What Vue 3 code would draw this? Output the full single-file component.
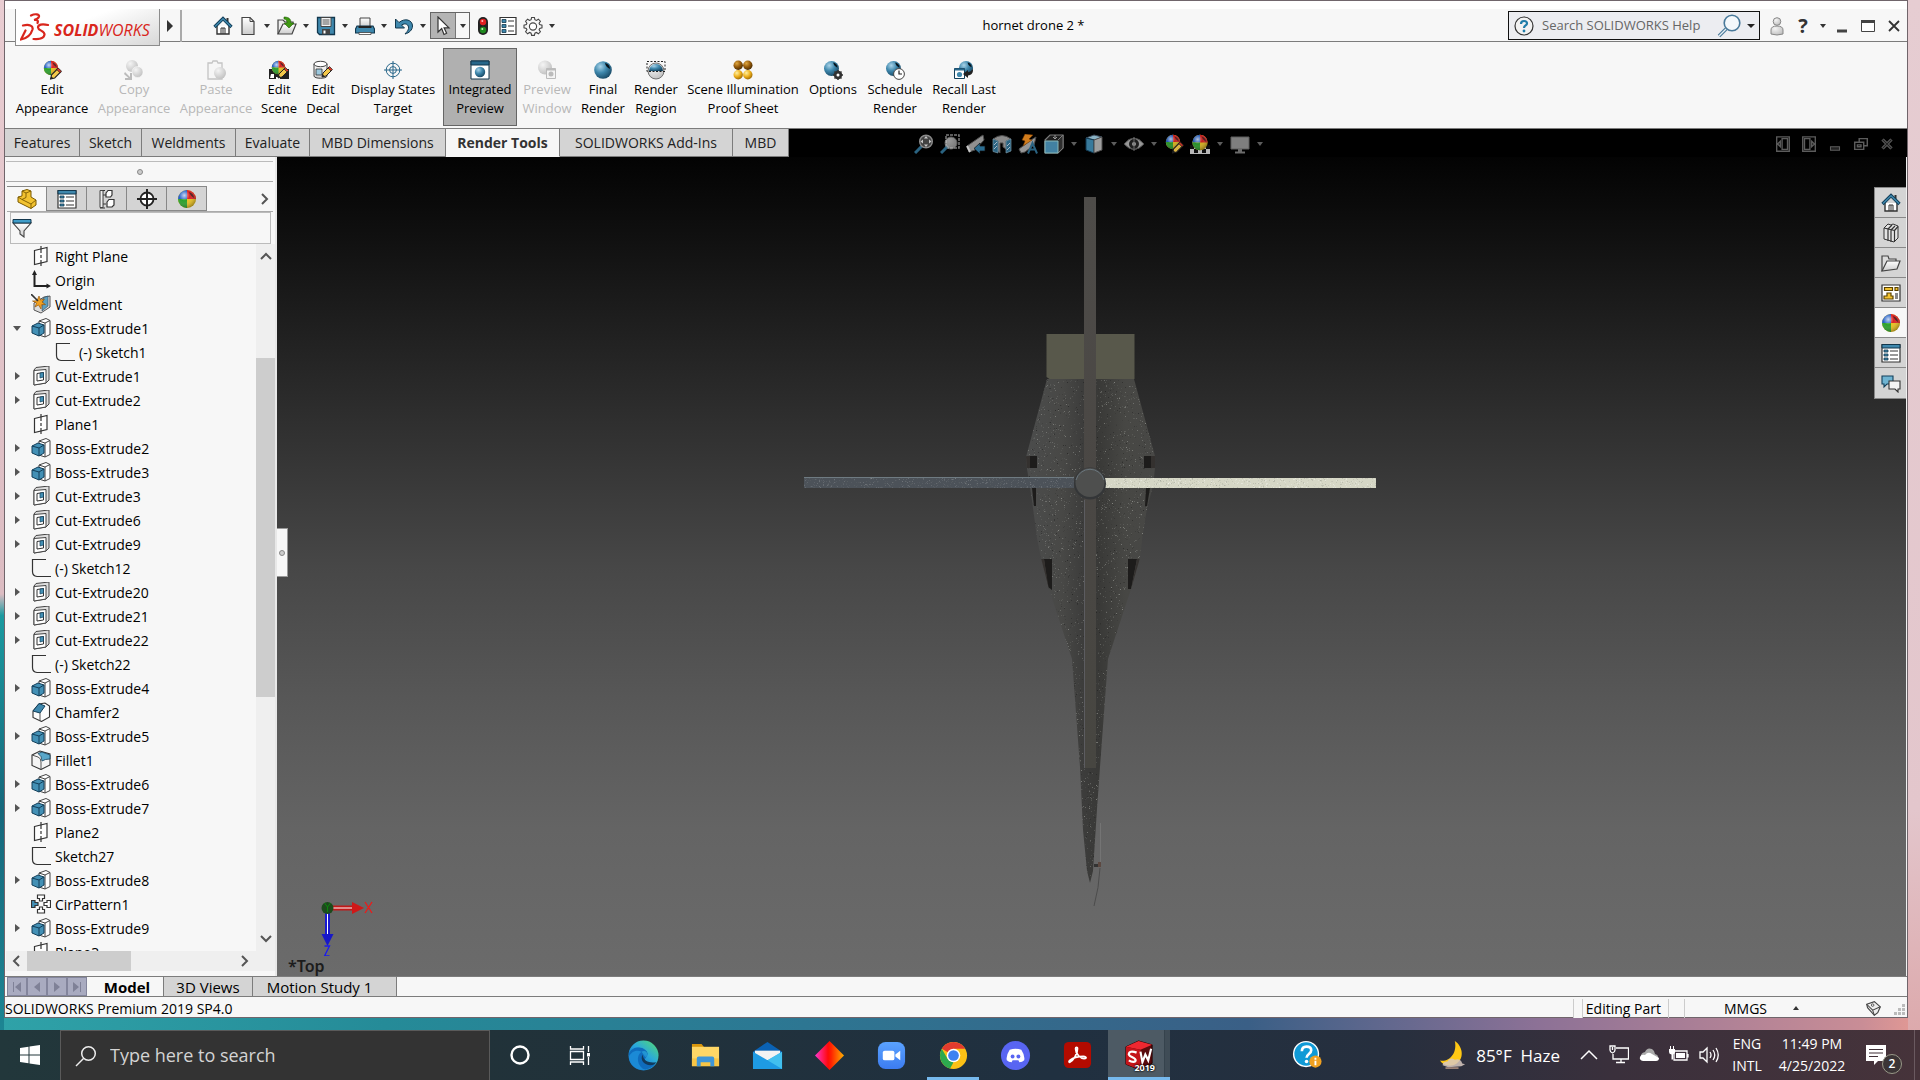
<script setup>
const quick = [
  { i: 'home', t: 'Home' },
  { i: 'new', t: 'New', d: true },
  { i: 'open', t: 'Open', d: true },
  { i: 'save', t: 'Save', d: true },
  { i: 'print', t: 'Print', d: true },
  { i: 'undo', t: 'Undo', d: true },
]
const ribbon = [
  { i: 'editapp', a: 'Edit', b: 'Appearance', w: 82 },
  { i: 'copyapp', a: 'Copy', b: 'Appearance', w: 82, off: true },
  { i: 'pasteapp', a: 'Paste', b: 'Appearance', w: 82, off: true },
  { i: 'scene', a: 'Edit', b: 'Scene', w: 44 },
  { i: 'decal', a: 'Edit', b: 'Decal', w: 44 },
  { i: 'target', a: 'Display States', b: 'Target', w: 96 },
  { i: 'integrated', a: 'Integrated', b: 'Preview', w: 74, on: true },
  { i: 'prevwin', a: 'Preview', b: 'Window', w: 60, off: true },
  { i: 'sphere', a: 'Final', b: 'Render', w: 52 },
  { i: 'region', a: 'Render', b: 'Region', w: 54 },
  { i: 'proof', a: 'Scene Illumination', b: 'Proof Sheet', w: 120 },
  { i: 'options', a: 'Options', b: '', w: 60 },
  { i: 'schedule', a: 'Schedule', b: 'Render', w: 64 },
  { i: 'recall', a: 'Recall Last', b: 'Render', w: 74 },
]
const tabs = [
  { t: 'Features', w: 75 },
  { t: 'Sketch', w: 62 },
  { t: 'Weldments', w: 94 },
  { t: 'Evaluate', w: 74 },
  { t: 'MBD Dimensions', w: 136 },
  { t: 'Render Tools', w: 114, on: true },
  { t: 'SOLIDWORKS Add-Ins', w: 173 },
  { t: 'MBD', w: 56 },
]
const heads = [
  { i: 'zoomfit' }, { i: 'zoomarea' }, { i: 'prevview' }, { i: 'section' }, { i: 'dynann' },
  { i: 'orient', d: true }, { i: 'dispstyle', d: true }, { i: 'eye', d: true },
  { i: 'editapp' }, { i: 'applyscene', d: true }, { i: 'monitor', d: true },
]
const docCtl = ['dockl', 'dockr', 'docmin', 'docrest', 'docclose']
const panelTabs = ['part', 'props', 'config', 'dimx', 'ball']
const paneTabs = ['home', 'library', 'folder', 'palette', 'ball', 'props', 'forum']
const tree = [
  ['plane', 'Right Plane'], ['origin', 'Origin'], ['weld', 'Weldment'],
  ['boss', 'Boss-Extrude1', 'open'], ['sketch', '(-) Sketch1', 'child'],
  ['cut', 'Cut-Extrude1', 'closed'], ['cut', 'Cut-Extrude2', 'closed'], ['plane', 'Plane1'],
  ['boss', 'Boss-Extrude2', 'closed'], ['boss', 'Boss-Extrude3', 'closed'],
  ['cut', 'Cut-Extrude3', 'closed'], ['cut', 'Cut-Extrude6', 'closed'], ['cut', 'Cut-Extrude9', 'closed'],
  ['sketch', '(-) Sketch12'],
  ['cut', 'Cut-Extrude20', 'closed'], ['cut', 'Cut-Extrude21', 'closed'], ['cut', 'Cut-Extrude22', 'closed'],
  ['sketch', '(-) Sketch22'], ['boss', 'Boss-Extrude4', 'closed'], ['chamfer', 'Chamfer2'],
  ['boss', 'Boss-Extrude5', 'closed'], ['fillet', 'Fillet1'], ['boss', 'Boss-Extrude6', 'closed'],
  ['boss', 'Boss-Extrude7', 'closed'], ['plane', 'Plane2'], ['sketch', 'Sketch27'],
  ['boss', 'Boss-Extrude8', 'closed'], ['pattern', 'CirPattern1'], ['boss', 'Boss-Extrude9', 'closed'],
  ['plane', 'Plane3'],
]
const apps = ['edge', 'explorer', 'mail', 'diamond', 'zoomapp', 'chrome', 'discord', 'acrobat', 'sw']
const tray = [
  { i: 'up', t: 'Show hidden icons' }, { i: 'net', t: 'Network' }, { i: 'cloud', t: 'OneDrive' },
  { i: 'battery', t: 'Battery' }, { i: 'sound', t: 'Volume' },
]

/* Fixed-seed grain for the cast surface of the model */
let seed = 7
const rnd = () => (seed = (seed * 16807) % 2147483647) / 2147483647
const grain = Array.from({ length: 5200 }, () => {
  const y = Math.floor(380 + rnd() * 500)
  return { x: Math.floor(1026 + rnd() * 130), y, o: (0.08 + rnd() * rnd() * 0.5).toFixed(2), c: rnd() > 0.35 ? '#b4b6b0' : '#151515' }
})
const bladeGrain = Array.from({ length: 1200 }, () => ({
  x: Math.floor(804 + rnd() * 572), y: Math.floor(478 + rnd() * 10), o: (0.1 + rnd() * 0.3).toFixed(2), c: rnd() > 0.5 ? '#8c8f86' : '#fff',
}))
</script>

<template>
  <div class="desktop">
    <svg class="defs" width="0" height="0" aria-hidden="true">
      <defs>
        <radialGradient id="gs" cx=".35" cy=".3" r=".8"><stop offset="0" stop-color="#a9d3e8" /><stop offset=".45" stop-color="#3f88ad" /><stop offset="1" stop-color="#123f5a" /></radialGradient>
        <radialGradient id="gg" cx=".35" cy=".3" r=".8"><stop offset="0" stop-color="#f4f4f4" /><stop offset="1" stop-color="#bdbdbd" /></radialGradient>
        <radialGradient id="gsh" cx=".35" cy=".3" r=".75"><stop offset="0" stop-color="#fff" stop-opacity=".75" /><stop offset=".4" stop-color="#fff" stop-opacity="0" /><stop offset="1" stop-color="#000" stop-opacity=".35" /></radialGradient>
        <radialGradient id="gy" cx=".35" cy=".3" r=".8"><stop offset="0" stop-color="#fff0a0" /><stop offset=".5" stop-color="#eeb01c" /><stop offset="1" stop-color="#8a5a00" /></radialGradient>
        <radialGradient id="gb" cx=".35" cy=".3" r=".8"><stop offset="0" stop-color="#e0a840" /><stop offset=".5" stop-color="#94590a" /><stop offset="1" stop-color="#3c2400" /></radialGradient>
        <linearGradient id="gw" x2="0" y2="1"><stop offset="0" stop-color="#fff" /><stop offset="1" stop-color="#ccc" /></linearGradient>
        <linearGradient id="gedge" x1="0" y1="1" x2="1" y2="0"><stop offset="0" stop-color="#0b5cb5" /><stop offset=".5" stop-color="#29a7df" /><stop offset="1" stop-color="#55dc70" /></linearGradient>
        <linearGradient id="gdia"><stop offset="0" stop-color="#ff35d0" /><stop offset=".45" stop-color="#ff0a0a" /><stop offset=".55" stop-color="#ff2000" /><stop offset="1" stop-color="#ffb000" /></linearGradient>
        <linearGradient id="gzoom" x2="0" y2="1"><stop offset="0" stop-color="#5aa2ff" /><stop offset="1" stop-color="#3c7cf0" /></linearGradient>
      </defs>
      <symbol id="home" viewBox="0 0 20 20"><path d="M4 10v8h12v-8" fill="#fff" stroke="#333" stroke-width="1.4" /><path d="M8 18v-6h4v6M10 12v6" fill="none" stroke="#333" /><path d="M13.500 2h2v4h-2z" fill="#333" /><path d="M1.500 11 10 2.500 18.500 11" fill="none" stroke="#123f5a" stroke-width="3.200" /><path d="M2 10.600 10 2.800 18 10.600" fill="none" stroke="#3f88ad" stroke-width="1.400" /></symbol>
      <symbol id="new" viewBox="0 0 20 20"><path d="M4 1.500h8l4 4v13H4z" fill="url(#gw)" stroke="#444" stroke-width="1.200" /><path d="M12 1.500v4h4" fill="none" stroke="#444" /></symbol>
      <symbol id="open" viewBox="0 0 20 20"><path d="M1 18V4h5l2 2h8v4" fill="#eee" stroke="#444" stroke-width="1.200" /><path d="M1 18 6 8h13l-4 10z" fill="url(#gw)" stroke="#444" stroke-width="1.200" /><path d="M7 1c5 0 7 2 7 6h3l-5 5-5-5h3c0-2-1-4-3-4z" fill="#3f9a12" stroke="#225a08" stroke-width=".6" /></symbol>
      <symbol id="save" viewBox="0 0 20 20"><path d="M1.500 1.500h17v17h-15l-2-2z" fill="#3f88ad" stroke="#12374d" stroke-width="1.300" /><path d="M5 1.500h10v9H5z" fill="#f4f4f4" stroke="#444" /><path d="M6.500 4h7M6.500 6h7M6.500 8h7" stroke="#555" /><path d="M6 13h8v5.500H6z" fill="#444" /><path d="M7.500 14.500h2v3h-2z" fill="#fff" /></symbol>
      <symbol id="print" viewBox="0 0 20 20"><path d="M5 11V2h10v9" fill="url(#gw)" stroke="#444" /><path d="M2 10h16l1.500 3v4h-19v-4z" fill="#3f88ad" stroke="#12374d" stroke-width="1.200" /><path d="M3.500 10h13v2h-13z" fill="#222" /><path d="M4 16.500h12v2H4z" fill="#fff" stroke="#444" stroke-width=".8" /></symbol>
      <symbol id="undo" viewBox="0 0 20 20"><path d="M1.500 3v9h9L7.500 9c4-2.500 7.500-.5 7 3.500-.3 2.500-2 3.500-3.500 5.500 4-1 7.500-4 7.500-8C18.500 4 11 1.500 5 6.500z" fill="#3f88ad" stroke="#12374d" /></symbol>
      <symbol id="cursor" viewBox="0 0 20 20"><path d="M5 1v15l3.700-3.500L11 18.500l2.600-1.200-2.500-5.500H16z" fill="#fff" stroke="#333" stroke-width="1.200" /></symbol>
      <symbol id="traffic" viewBox="0 0 20 20"><rect x="5" y="1" width="10" height="18" rx="5" fill="#222" /><circle cx="10" cy="6" r="3.200" fill="#e02020" /><circle cx="10" cy="14" r="3.200" fill="#1f8a1f" /><circle cx="9.300" cy="5" r="1" fill="#fbb" /><circle cx="9.300" cy="13" r="1" fill="#bfb" /></symbol>
      <symbol id="list" viewBox="0 0 20 20"><path d="M2 1.500h16v17H2z" fill="#fff" stroke="#333" stroke-width="1.200" /><path d="M4 3.500h4v3H4zM4 8.500h4v3H4zM4 13.500h4v3H4z" fill="#3f88ad" stroke="#12374d" stroke-width=".8" /><path d="M10 5h6M10 10h6M10 15h6" stroke="#333" /></symbol>
      <symbol id="gear" viewBox="0 0 20 20"><path d="m8.600 1.500 2.800 0 .5 2.200 1.500.7 2-1.200 2 2-1.300 2 .6 1.400 2.300.5v2.800l-2.300.5-.6 1.400 1.300 2-2 2-2-1.300-1.500.7-.5 2.200H8.600l-.5-2.200-1.500-.7-2 1.300-2-2 1.300-2-.6-1.400L1 11.900V9.100l2.300-.5.6-1.400-1.300-2 2-2 2 1.200 1.500-.7z" fill="#f7f7f7" stroke="#444" stroke-width="1.100" /><circle cx="10" cy="10.500" r="3.600" fill="#fff" stroke="#444" stroke-width="1.100" /></symbol>
      <symbol id="ball" viewBox="0 0 20 20"><circle cx="10" cy="10" r="9" fill="#e8bf1f" /><path d="M10 10V1a9 9 0 0 0-9 9z" fill="#2360c8" /><path d="M10 10V1a9 9 0 0 1 9 9z" fill="#d92222" /><path d="M10 10H1a9 9 0 0 0 9 9z" fill="#2ca02c" /><circle cx="10" cy="10" r="9" fill="url(#gsh)" /><path d="M12 3c3 1 5 3 5 6-2-1-4-3-5-6z" fill="#222" opacity=".7" /></symbol>
      <symbol id="pencil" viewBox="0 0 12 12"><path d="m1 11 1-4 6-6 3 3-6 6z" fill="#f3c84a" stroke="#222" /><path d="m7 2 3 3 1.500-1.500-3-3z" fill="#d63a2a" stroke="#222" stroke-width=".7" /><path d="m1 11 .7-2.700 2 2z" fill="#222" /></symbol>
      <symbol id="editapp" viewBox="0 0 20 20"><use href="#ball" x="1" y="0" width="16" height="16" /><use href="#pencil" x="7.500" y="7.500" width="12.500" height="12.500" /></symbol>
      <symbol id="copyapp" viewBox="0 0 20 20"><circle cx="8" cy="6" r="6" fill="url(#gg)" /><circle cx="13.500" cy="12" r="5.500" fill="url(#gg)" stroke="#fff" stroke-width=".5" /><path d="m1 12 5 5v-4h2v7H1v-2h3.500L0 14z" fill="#bbb" /></symbol>
      <symbol id="pasteapp" viewBox="0 0 20 20"><path d="M2 3h4l1-2h4l1 2h4v16H2z" fill="#f6f6f6" stroke="#c4c4c4" stroke-width="1.300" /><circle cx="14" cy="13" r="6" fill="url(#gg)" /></symbol>
      <symbol id="scene" viewBox="0 0 20 20"><path d="M0 9h20v10H0z" fill="#222" /><path d="M2 14h3v4H1zM7 17h4v2H7z" fill="#fff" /><use href="#ball" x="2" y="0" width="15" height="15" /><use href="#pencil" x="8" y="7" width="12" height="12" /></symbol>
      <symbol id="decal" viewBox="0 0 20 20"><path d="M1 4v12c0 3 13 3 13 0V4" fill="url(#gw)" stroke="#444" /><ellipse cx="7.500" cy="4" rx="6.500" ry="2.700" fill="#fff" stroke="#444" /><path d="M3 9h6v6H3z" fill="#9cc8dd" stroke="#333" stroke-width=".8" /><use href="#pencil" x="8" y="6" width="12" height="12" /></symbol>
      <symbol id="target" viewBox="0 0 20 20"><g fill="none" stroke="#28678a" stroke-width="1"><circle cx="10" cy="10" r="6.800" /><circle cx="10" cy="10" r="3.400" /><path d="M10 1v18M1 10h18" /></g></symbol>
      <symbol id="integrated" viewBox="0 0 20 20"><path d="M1 1h18v18H1z" fill="#fff" stroke="#12374d" /><path d="M1 1h18v4H1z" fill="#28678a" stroke="#12374d" /><circle cx="10" cy="12" r="5.200" fill="url(#gs)" /></symbol>
      <symbol id="prevwin" viewBox="0 0 20 20"><circle cx="8" cy="7.500" r="7" fill="url(#gg)" /><path d="M9.500 8.500h9v10h-9z" fill="#f4f4f4" stroke="#bbb" /><circle cx="14" cy="14" r="2.500" fill="#bbb" /><path d="M9.500 8.500h9v2h-9z" fill="#bbb" /></symbol>
      <symbol id="sphere" viewBox="0 0 20 20"><circle cx="10" cy="10" r="8.800" fill="url(#gs)" /><path d="M12 3c3 .6 5 3 5 6-2.500-1-4.500-3-5-6z" fill="#06121a" /></symbol>
      <symbol id="region" viewBox="0 0 20 20"><circle cx="10" cy="11" r="8" fill="url(#gg)" stroke="#555" stroke-width=".8" /><path d="M3 11a7 7 0 0 1 14 0z" fill="url(#gs)" /><path d="M1 1.500h18v10H1z" fill="none" stroke="#222" stroke-dasharray="2 1.500" /></symbol>
      <symbol id="proof" viewBox="0 0 20 20"><circle cx="5.200" cy="5.200" r="4.700" fill="url(#gb)" /><circle cx="14.800" cy="5.200" r="4.700" fill="url(#gb)" /><circle cx="5.200" cy="14.800" r="4.700" fill="url(#gy)" /><circle cx="14.800" cy="14.800" r="4.700" fill="url(#gy)" /></symbol>
      <symbol id="options" viewBox="0 0 20 20"><use href="#sphere" x="0" y="0" width="17" height="17" /><circle cx="15" cy="15" r="3" fill="none" stroke="#333" stroke-width="2.400" /><path d="M15 10v10M10 15h10M11.500 11.500l7 7M18.500 11.500l-7 7" stroke="#333" stroke-width="1.500" /><circle cx="15" cy="15" r="1.500" fill="#fff" /></symbol>
      <symbol id="schedule" viewBox="0 0 20 20"><use href="#sphere" x="0" y="0" width="17" height="17" /><circle cx="14" cy="14" r="5.400" fill="#fff" stroke="#444" /><path d="M14 10.500V14h3" fill="none" stroke="#222" stroke-width="1.200" /></symbol>
      <symbol id="recall" viewBox="0 0 20 20"><use href="#sphere" x="4" y="0" width="16" height="16" /><path d="M.5 8.500h10v10H.5z" fill="#fff" stroke="#123f5a" /><path d="M.5 8.500h10v2H.5z" fill="#28678a" /><circle cx="5.500" cy="14.500" r="2.600" fill="#3f88ad" /><path d="M19 9c0 4-1 6-5 6.500V18l-5-4 5-4v2c2 0 3-1 5-3z" fill="#222" /></symbol>
      <symbol id="zoomfit" viewBox="0 0 20 20"><path d="m1 19 7-7" stroke="#2f6e90" stroke-width="3" /><circle cx="12" cy="7.500" r="6.300" fill="#4a4a4a" stroke="#999" stroke-width="1.500" /><path d="m12 2 2 2.500h-4zM12 13l2-2.500h-4zM6.500 7.500 9 5.500v4zM17.500 7.500 15 5.500v4z" fill="#ddd" /></symbol>
      <symbol id="zoomarea" viewBox="0 0 20 20"><path d="M6 1h13v13H6z" fill="none" stroke="#888" stroke-dasharray="3 1" stroke-width="1.500" /><path d="m1 19 7-7" stroke="#2f6e90" stroke-width="3" /><circle cx="11" cy="9" r="6" fill="url(#gg)" opacity=".7" stroke="#999" /></symbol>
      <symbol id="prevview" viewBox="0 0 20 20"><path d="m1 12 13-9 3-2 1 5-9 10-6 2z" fill="#a0a0a0" stroke="#555" /><path d="m1 12 3 6" stroke="#ddd" stroke-width="2" /><path d="M19 12v5h-5v3l-6-5.500L14 9v3z" fill="#2f78a0" stroke="#111" stroke-width=".7" /></symbol>
      <symbol id="section" viewBox="0 0 20 20"><path d="M1 5q9-7 18 0l-5 2v8l-3-2V9H8v10l-2-2V7z" fill="#999" stroke="#555" /><path d="M1 5l5 2v12l-5-1.500zM14 7l5-2v12l-5 2z" fill="#2f6e90" stroke="#8ab" stroke-width=".7" /><path d="m2 11 3-3M2 15l3-3M15 12l3-3M15 16l3-3" stroke="#bcd" /></symbol>
      <symbol id="dynann" viewBox="0 0 20 20"><path d="m1 15 12-9 5-3-2 8-9 7-4 1z" fill="#a8a8a8" stroke="#555" /><path d="m7 0 8 1-4 4 3 1-9 6 2-5-3-1z" fill="#e88a20" stroke="#7a3c00" stroke-width=".5" /><path d="M10 19.500 14.500 9l4.500 10.500M12 15.500h5.500" fill="none" stroke="#2f6e90" stroke-width="2" /></symbol>
      <symbol id="orient" viewBox="0 0 20 20"><path d="m1 6 5-5h13v13l-5 5H1z" fill="#222" stroke="#888" stroke-width="1.200" /><path d="m14 6 5-5v13l-5 5" fill="#333" stroke="#888" /><path d="M1 7h13v12H1z" fill="#4a90b4" stroke="#9cc" /><path d="M11 1v4m-2-2 2 2 2-2" stroke="#aaa" fill="none" /></symbol>
      <symbol id="dispstyle" viewBox="0 0 20 20"><path d="m2 4 8-3 8 2-7 3z" fill="#9ac6da" stroke="#456" /><path d="m2 4 8 2v13l-8-3z" fill="#3f88ad" stroke="#123f5a" /><path d="m10 6 8-3v13l-8 3z" fill="#b0b0b0" stroke="#555" /></symbol>
      <symbol id="eye" viewBox="0 0 20 20"><path d="M0 10q10-12 20 0-10 11-20 0z" fill="#a8a8a8" stroke="#555" /><circle cx="10" cy="10" r="5" fill="#222" /><circle cx="10" cy="10" r="2" fill="#aaa" /><path d="M10 3v14" stroke="#777" /></symbol>
      <symbol id="applyscene" viewBox="0 0 20 20"><path d="M0 11h20v9H0z" fill="#ccc" /><path d="M0 11h4v4H0zM8 11h4v4H8zM16 11h4v4h-4zM4 15h4v4H4zM12 15h4v4h-4z" fill="#111" /><use href="#ball" x="1.500" y="0" width="17" height="17" /></symbol>
      <symbol id="monitor" viewBox="0 0 20 20"><path d="M1 3h18v12H1z" fill="#8c8c8c" stroke="#666" /><path d="M8 15h4v3H8zM5 17.500h10v2H5z" fill="#777" /></symbol>
      <symbol id="dockl" viewBox="0 0 20 20"><g fill="none" stroke="#5c5c5c" stroke-width="1.500"><path d="M3 2h14v16H3zM9 4v12h6V4zM7 7l-3 3 3 3z" /></g></symbol>
      <symbol id="dockr" viewBox="0 0 20 20"><g fill="none" stroke="#5c5c5c" stroke-width="1.500"><path d="M3 2h14v16H3zM5 4v12h6V4zM13 7l3 3-3 3z" /></g></symbol>
      <symbol id="docmin" viewBox="0 0 20 20"><path d="M5 13h10v4H5z" fill="#222" stroke="#5c5c5c" stroke-width="1.200" /></symbol>
      <symbol id="docrest" viewBox="0 0 20 20"><path d="M8 8V4h9v8h-4M3 8h10v8H3zM6 11h4v2H6z" fill="none" stroke="#5c5c5c" stroke-width="1.600" /></symbol>
      <symbol id="docclose" viewBox="0 0 20 20"><path d="m5 5 10 10M15 5 5 15" stroke="#666" stroke-width="3.500" /><path d="m5 5 10 10M15 5 5 15" stroke="#222" stroke-width="1.200" /></symbol>
      <symbol id="part" viewBox="0 0 20 20"><path d="m1 8 4-1V2l5-1.500L14 2v6l5 3v5l-5 3.500L1 13z" fill="#f2c230" stroke="#7a5a00" /><path d="m1 8 4 2.500 4-2V4L5 2M9 4l5-2M5 10.500l9 4.500 5-4M14 15v4.500" fill="none" stroke="#7a5a00" stroke-width=".9" /></symbol>
      <symbol id="props" viewBox="0 0 20 20"><path d="M1 1.500h18v17.500H1z" fill="#fff" stroke="#333" stroke-width="1.200" /><path d="M1 1.500h18V5H1z" fill="#3f88ad" stroke="#12374d" /><path d="M3 7h4v2H3zM3 11h4v2H3zM3 15h4v2H3z" fill="#3f88ad" stroke="#12374d" stroke-width=".8" /><path d="M9 8h8M9 12h8M9 16h8" stroke="#333" stroke-width="1.200" /></symbol>
      <symbol id="config" viewBox="0 0 20 20"><path d="M5.500 2v17M3 1.500h5M5.500 6H9M5.500 15H9M3 19h5" fill="none" stroke="#333" stroke-width="1.200" /><path d="M3 1.500h3v17H3z" fill="#eee" stroke="#444" /><path d="m9 4 2-2.500h4V6l-1.500 2H9zM10 13l2-2.500h5V16l-2 2h-5z" fill="#fff" stroke="#333" stroke-width="1.200" /></symbol>
      <symbol id="dimx" viewBox="0 0 20 20"><circle cx="10" cy="10" r="6.500" fill="#fff" stroke="#222" stroke-width="1.800" /><path d="M10 0v20M0 10h20" stroke="#222" stroke-width="2" /></symbol>
      <symbol id="filter" viewBox="0 0 20 20"><path d="M1 5h18l-7 8v6l-4-3v-3z" fill="url(#gw)" stroke="#444" stroke-width="1.100" /><path d="M1 1.500h18v3.500H1z" fill="#3f9cc8" stroke="#12374d" /></symbol>
      <symbol id="plane" viewBox="0 0 20 20"><path d="M3.500 4.500 16 1.500v14l-12.500 3z" fill="#fdfdfd" stroke="#333" stroke-width="1.200" /><path d="M10 0v20" stroke="#333" stroke-width="1.200" stroke-dasharray="7 2 3 2" /></symbol>
      <symbol id="origin" viewBox="0 0 20 20"><path d="M3.500 3v13H17" fill="none" stroke="#222" stroke-width="2" /><path d="M3.500 0 1 5h5zM20 16l-4.500-2.500v5z" fill="#222" /></symbol>
      <symbol id="weld" viewBox="0 0 20 20"><path d="m3 9 10-6 6-1v11l-9 6-7-3z" fill="#ddd" stroke="#555" /><path d="m12 4 5-2v10l-6 5z" fill="#5a9fc0" stroke="#345" stroke-width=".6" /><path d="m8 2 1.500 4 4-1-2.500 3 3.500 2.500-4 .2-.5 4.300L7.500 11 4 13l1.500-4-4-2 4.500-.3z" fill="#f0a020" stroke="#8a4a00" stroke-width=".6" /><path d="m0 0 7 7" stroke="#333" stroke-width="1.600" /></symbol>
      <symbol id="boss" viewBox="0 0 20 20"><path d="m8 3 7-2.500 4 2v14l-5 2.500-6-2z" fill="#fff" stroke="#444" /><path d="M14 5v14M8 3l6 2 5-2.500" fill="none" stroke="#444" /><path d="m1 8 6-3 6 2v8l-5 3-7-3z" fill="#4390b5" stroke="#123f5a" /><path d="m1 8 7 2 5-3M8 10v8" fill="none" stroke="#123f5a" /></symbol>
      <symbol id="cut" viewBox="0 0 20 20"><path d="m3 4 2-2.500 13-1.500v14l-3 3-12 2z" fill="#ddd" stroke="#444" /><path d="M3 4.500 15 3.500v13.500L3 19z" fill="#fff" stroke="#444" /><path d="M6 7.500 12.500 6.500v7.500L6 15z" fill="#fff" stroke="#333" /><path d="M9 7v5l3.500-1V6.500z" fill="#4390b5" stroke="#123f5a" stroke-width=".7" /></symbol>
      <symbol id="sketch" viewBox="0 0 20 20"><path d="M15 1.500H1.500v12q0 4.500 4.500 5h14" fill="none" stroke="#333" stroke-width="1.200" /></symbol>
      <symbol id="chamfer" viewBox="0 0 20 20"><path d="m2 9 6-7 6-1 4.500 3v11l-8 4.500-8.500-4z" fill="#fdfdfd" stroke="#333" stroke-width="1.100" /><path d="m2 9 6-7.500 6 2.500-5 7z" fill="#3f88ad" stroke="#123f5a" /><path d="M9 11v8" stroke="#555" /></symbol>
      <symbol id="fillet" viewBox="0 0 20 20"><path d="m1 5 8-4 10 3v11l-9 4.500-9-4z" fill="#f4f4f4" stroke="#333" stroke-width="1.100" /><path d="m1 5 6 2q3 1 3 5v7.500" fill="none" stroke="#555" /><path d="M7 3.500 11 2l8 3v4q-5 0-8 2 0-5-4-7.500z" fill="#5aa7c9" stroke="#123f5a" stroke-width=".8" /></symbol>
      <symbol id="pattern" viewBox="0 0 20 20"><g fill="#fff" stroke="#333" stroke-width="1.200"><path d="M6.500 1h7v3.500h-2V7h-3V4.500h-2z" /><path d="M6.500 19h7v-3.500h-2V13h-3v2.500h-2z" /><path d="M19.500 6.500v7H16v-2h-3v-3h3v-2z" /><path d="M.5 6.500v7H4v-2h3v-3H4v-2z" fill="#4390b5" /></g></symbol>
      <symbol id="library" viewBox="0 0 20 20"><path d="m3 5 4-4 3 1 2-1 5 2v12l-4 4-3-1-7-2z" fill="#e4e4e4" stroke="#333" /><path d="M3 5l4 1v12M7 6l4-4M10 7v12M10 7l4-4M13.500 7.500v11M13.500 7.500l3.500-4M7 6l6.500 1.500" fill="none" stroke="#333" stroke-width="1.200" /></symbol>
      <symbol id="folder" viewBox="0 0 20 20"><path d="M1 18V3h6l1 3h7v3" fill="#ddd" stroke="#444" stroke-width="1.200" /><path d="m1 18 5-10h13l-3 8z" fill="url(#gw)" stroke="#444" stroke-width="1.200" /></symbol>
      <symbol id="palette" viewBox="0 0 20 20"><path d="M1 2h18v16H1z" fill="#fff" stroke="#333" stroke-width="1.200" /><path d="M3.500 4.500h8v3h-8zM14 4.500h3v3h-3zM6 10h4v3h2v3H3v-3h3z" fill="#f2c230" stroke="#5a4200" stroke-width="1.200" /><path d="M14 10h3v6h-3z" fill="#888" /></symbol>
      <symbol id="forum" viewBox="0 0 20 20"><path d="M1 3h11v8H6l-3 3v-3H1z" fill="#6fb4d2" stroke="#123f5a" stroke-width="1.100" /><path d="M8 8h11v8h-2v3l-3-3H8z" fill="#f4f4f4" stroke="#333" stroke-width="1.100" /></symbol>

      <symbol id="edge" viewBox="0 0 32 32"><circle cx="16" cy="16" r="15.500" fill="url(#gedge)" /><path d="M1 14C4 6 15 6 19 11c3 4 1 6-1 8-3 4 5 8 11 4-6 12-28 10-28-9z" fill="#0f6cbd" /><path d="M14 12c-6 4-5 15 4 19-10 1-17-6-17-14 3-6 9-7 13-5z" fill="#1b8ad6" /><path d="M14 12c5-2 7 2 5 5-3 4 2 8 10 6 1-1 2-3 1-2 3-9-3-19-14-20C8 1 2 7 1 13 6 6 12 7 16 9c6 3 5 6 2 9" fill="url(#gedge)" opacity=".7" /><path d="M15 15c-3 6 2 11 8 11 3 0 5-1 6-3-7 1-13-1-14-8z" fill="#123a5c" /></symbol>
      <symbol id="explorer" viewBox="0 0 32 32"><path d="M2 4h10l3 4H2z" fill="#d9960c" /><path d="M2 7h28v20H2z" fill="#ffd766" /><path d="M2 19h28v8H2z" fill="#f8c545" /><path d="M7 27v-8q0-2 2-2h14q2 0 2 2v8h-4v-4H11v4z" fill="#3f96d8" /></symbol>
      <symbol id="mail" viewBox="0 0 32 32"><path d="M1 12 16 2l15 10v4H1z" fill="#0a62b4" /><path d="M3 11h26v10H3z" fill="#f3f3f3" /><path d="m1 12 15 9 15-9v18H1z" fill="#1e9be4" /><path d="m16 21 15-9v18z" fill="#50d0f4" opacity=".7" /></symbol>
      <symbol id="diamond" viewBox="0 0 32 32"><path d="m16 1 15 15-15 15L1 16z" fill="url(#gdia)" /></symbol>
      <symbol id="zoomapp" viewBox="0 0 32 32"><rect x="2" y="2" width="28" height="28" rx="8" fill="url(#gzoom)" /><rect x="7" y="11" width="12" height="10" rx="2" fill="#fff" /><path d="m20 15 5-4v10l-5-4z" fill="#fff" /></symbol>
      <symbol id="chrome" viewBox="0 0 32 32"><circle cx="16" cy="16" r="14" fill="#fbc116" /><path d="M16 16 3.900 9A14 14 0 0 1 28.100 9H16z" fill="#e33b2e" /><path d="M3.900 9 10 19.500l6 3.500-3.500 6.500A14 14 0 0 1 3.900 9z" fill="#2da94f" /><circle cx="16" cy="16" r="7" fill="#fff" /><circle cx="16" cy="16" r="5.500" fill="#3e82f1" /></symbol>
      <symbol id="discord" viewBox="0 0 32 32"><circle cx="16" cy="16" r="15" fill="#5865f2" /><path d="M10 10q6-2 12 0 4 6 3 11-2 2-5 2l-1-2h-6l-1 2q-3 0-5-2-1-5 3-11z" fill="#fff" /><circle cx="13" cy="17" r="2" fill="#5865f2" /><circle cx="19" cy="17" r="2" fill="#5865f2" /></symbol>
      <symbol id="acrobat" viewBox="0 0 32 32"><rect x="2" y="2" width="28" height="27" rx="5" fill="#b30b00" /><path d="M8 23c4-2 8-9 8-14 0-2-2-2-2 0 0 5 5 11 10 10 2-1 0-2-2-2-5 0-10 1-14 4-1 1-1 2 0 2z" fill="none" stroke="#fff" stroke-width="1.800" /></symbol>
      <symbol id="sw" viewBox="0 0 32 32"><path d="m2 7 13-6 14 4v19l-12 7L2 25z" fill="#5a0a0c" stroke="#200" /><path d="m2 7 13-6 14 4-12 5z" fill="#ee2830" /><path d="m2 7 15 3v21L2 25z" fill="#c4141a" /><path d="M13 13c-5-2-8-1-8 2 1 3 7 3 7 6 0 2-4 2-7 0" fill="none" stroke="#fff" stroke-width="2.300" /><path d="m17 12 2 11 3-8 3 6 3-12" fill="none" stroke="#fff" stroke-width="2.200" /></symbol>
      <symbol id="up" viewBox="0 0 20 20"><path d="m2 14 8-8 8 8" fill="none" stroke="#fff" stroke-width="1.500" /></symbol>
      <symbol id="net" viewBox="0 0 20 20"><path d="M7 3h12.500v11H4V9M12 14v3M7 17.500h9M1 1h5v4q0 2-2.500 3Q1 7 1 5zM3.500 2v3" fill="none" stroke="#fff" stroke-width="1.300" /></symbol>
      <symbol id="cloud" viewBox="0 0 20 20"><path d="M2 13q-1-5 4-6 2-5 7-3 3 2 3 5 4 1 3 5z" fill="#aaa" /><path d="M4 16q-4-1-3-4 1-3 5-2 3-4 7-1l7 4q0 3-3 3z" fill="#fff" /></symbol>
      <symbol id="battery" viewBox="0 0 20 20"><path d="M5 6h13v9H5zM19 9v3.500" fill="none" stroke="#fff" stroke-width="1.300" /><path d="M7 8h9v5H7zM0 4h6v3q0 2-2 2.500v5H2.500v-5Q0 9 0 7zM1 1h1v3H1zM4 1h1v3H4z" fill="#fff" /></symbol>
      <symbol id="sound" viewBox="0 0 20 20"><path d="M1 7h3l4-4v14l-4-4H1zM11 7q2 3 0 6M14 5q3.500 5 0 10M17 3q4.500 7 0 14" fill="none" stroke="#fff" stroke-width="1.300" /></symbol>
    </svg>

    <main class="window">
      <header class="titlebar">
        <div class="brand">
          <svg class="ds" viewBox="0 0 30 32" aria-hidden="true"><path d="M11 4.500c4-2 8.500-1.500 8 1-.5 2-3 3-5 3.500 3.500-.5 4.500 1 3.500 3M3 14.500c6-1.500 10.500 0 9.500 4-1.500 5-6 9-11.500 10l4.500-9M28 14c-6-1.500-10-.5-10 2.500s7 3.500 6.500 7c-.5 4-6 5-11 4.500" fill="none" stroke="#d9261c" stroke-width="2.200" stroke-linecap="round" /></svg>
          <span class="word"><b>SOLID</b>WORKS</span>
        </div>
        <button class="flyout" aria-label="Show menu"><i class="tri-r"></i></button>
        <nav class="quick">
          <template v-for="q in quick" :key="q.i">
            <button class="qb" :aria-label="q.t"><svg class="ic"><use :href="'#' + q.i" /></svg></button>
            <button v-if="q.d" class="qd" :aria-label="q.t + ' menu'"><i class="tri"></i></button>
          </template>
          <span class="sel">
            <button class="selb" aria-label="Select"><svg class="ic"><use href="#cursor" /></svg></button>
            <button class="seld" aria-label="Select menu"><i class="tri"></i></button>
          </span>
          <button class="qb" aria-label="Rebuild"><svg class="ic"><use href="#traffic" /></svg></button>
          <button class="qb" aria-label="File properties"><svg class="ic"><use href="#list" /></svg></button>
          <button class="qb" aria-label="Options"><svg class="ic"><use href="#gear" /></svg></button>
          <button class="qd" aria-label="Options menu"><i class="tri"></i></button>
        </nav>
        <h1 class="doc">hornet drone 2 *</h1>
        <label class="help">
          <svg class="ic" viewBox="0 0 20 20"><circle cx="10" cy="10" r="9" fill="#f2f2f2" stroke="#333" stroke-width="1.200" /><path d="M7 8q0-3 3-3t3 2.500c0 2-3 2-3 4.500" fill="none" stroke="#1f7ca8" stroke-width="2.200" /><circle cx="10" cy="15" r="1.400" fill="#1f7ca8" /></svg>
          <input type="text" aria-label="Search SOLIDWORKS Help" placeholder="Search SOLIDWORKS Help" />
          <svg class="mag" viewBox="0 0 24 24"><path d="m2 22 8-8" stroke="#49799a" stroke-width="3.500" /><path d="m2 22 8-8" stroke="#e6eef4" stroke-width="1.200" /><circle cx="15" cy="9" r="7.800" fill="#f4f8fb" stroke="#49799a" stroke-width="1.600" /></svg>
          <i class="tri big"></i>
        </label>
        <div class="wctl">
          <button aria-label="Log in"><svg class="ic" viewBox="0 0 20 20"><circle cx="10" cy="5.500" r="3.800" fill="url(#gg)" stroke="#888" /><path d="M4 18v-4q0-4 6-4t6 4v4q-6 2-12 0z" fill="url(#gg)" stroke="#888" /></svg></button>
          <button class="q" aria-label="Help">?</button>
          <button class="n" aria-label="Help menu"><i class="tri"></i></button>
          <button aria-label="Minimize"><svg class="ic" viewBox="0 0 20 20"><path d="M5 13.500h10v3H5z" fill="#444" /></svg></button>
          <button aria-label="Maximize"><svg class="ic" viewBox="0 0 20 20"><path d="M3.500 4.500h13v11h-13z" fill="#fff" stroke="#444" /><path d="M3 4h14v3H3z" fill="#444" /></svg></button>
          <button aria-label="Close"><svg class="ic" viewBox="0 0 20 20"><path d="m5 5 10 10M15 5 5 15" stroke="#333" stroke-width="1.800" /></svg></button>
        </div>
      </header>

      <section class="ribbon">
        <button v-for="r in ribbon" :key="r.i" class="rb" :class="{ off: r.off, on: r.on }" :style="{ width: r.w + 'px' }">
          <svg class="ic"><use :href="'#' + r.i" /></svg>
          <span>{{ r.a }}</span><span>{{ r.b }}</span>
        </button>
      </section>

      <div class="tabrow">
        <nav class="tabs">
          <button v-for="t in tabs" :key="t.t" :class="{ on: t.on }" :style="{ width: t.w + 'px' }">{{ t.t }}</button>
        </nav>
        <div class="heads">
          <template v-for="h in heads" :key="h.i">
            <button class="hb" :aria-label="h.i"><svg class="ic"><use :href="'#' + h.i" /></svg></button>
            <button v-if="h.d" class="hd" :aria-label="h.i + ' menu'"><i class="tri dim"></i></button>
          </template>
        </div>
        <div class="docctl">
          <button v-for="d in docCtl" :key="d" :aria-label="d"><svg class="ic"><use :href="'#' + d" /></svg></button>
        </div>
      </div>

      <div class="work">
        <aside class="panel">
          <div class="grip"><i class="dot"></i></div>
          <div class="ptabs">
            <button v-for="(p, k) in panelTabs" :key="p" :class="{ on: k === 0 }" :aria-label="p"><svg class="ic"><use :href="'#' + p" /></svg></button>
            <button class="more" aria-label="More tabs"><svg viewBox="0 0 10 12"><path d="m2 1 5 5-5 5" fill="none" stroke="#555" stroke-width="2" /></svg></button>
          </div>
          <label class="filter"><svg class="ic"><use href="#filter" /></svg><input type="text" aria-label="Filter tree" /></label>
          <div class="body">
            <ul class="tree">
              <li v-for="n in tree" :key="n[1]" :class="n[2]">
                <i class="exp"></i><svg class="ic"><use :href="'#' + n[0]" /></svg><span>{{ n[1] }}</span>
              </li>
            </ul>
            <div class="vbar">
              <svg viewBox="0 0 12 8"><path d="m1 7 5-5 5 5" fill="none" stroke="#555" stroke-width="2" /></svg>
              <span class="vthumb"></span>
              <svg viewBox="0 0 12 8"><path d="m1 1 5 5 5-5" fill="none" stroke="#555" stroke-width="2" /></svg>
            </div>
          </div>
          <div class="hbar">
            <svg viewBox="0 0 8 12"><path d="M7 1 2 6l5 5" fill="none" stroke="#555" stroke-width="2" /></svg>
            <span class="hthumb"></span>
            <svg viewBox="0 0 8 12"><path d="m1 1 5 5-5 5" fill="none" stroke="#555" stroke-width="2" /></svg>
          </div>
        </aside>

        <section class="viewport">
          <button class="splitter" aria-label="Hide panel"><i class="dot"></i></button>
          <svg class="drone" viewBox="804 197 572 712" role="img" aria-label="Drone, top view">
            <defs>
              <linearGradient id="bodyg"><stop offset="0" stop-color="#4c4d4d" /><stop offset=".3" stop-color="#484846" /><stop offset=".46" stop-color="#3c3c3b" /><stop offset=".56" stop-color="#393937" /><stop offset=".75" stop-color="#474744" /><stop offset="1" stop-color="#484846" /></linearGradient>
              <linearGradient id="spineg" x2="0" y2="1"><stop offset="0" stop-color="#4e4c49" /><stop offset=".5" stop-color="#4a4744" /><stop offset="1" stop-color="#474641" /></linearGradient>
              <clipPath id="hull"><path d="M1047 379h87l21 77v12l-2 18-6 22-5 32-2 18-9 31-23 70-8 108-3 42-4 62-3 12-3-12-4-41-3-63-8-108-23-70-8-31-4-20-4-30-3-21-3-18-1-12z" /></clipPath>
            </defs>
            <g clip-path="url(#hull)">
              <path d="M1020 375h140v512h-140z" fill="url(#bodyg)" />
              <rect v-for="(g, k) in grain" :key="k" :x="g.x" :y="g.y" width="1" height="1" :fill="g.c" :opacity="g.o" />
              <path d="M1029 456h8v12h-8zM1144 456h8v12h-8zM1032 488h4v18h-2zM1146 488h4l-3 18h-2zM1044 559h8v31l-4-3zM1128 559h9l-6 30h-3z" fill="#1d1c1b" />
              <path d="M1026 456h4v12h-4zM1151 456h4v12h-4zM1040 559h4l5 31-4-3zM1137 559h3l-7 31h-2z" fill="#34312f" />
            </g>
            <path d="M1046.500 334h88v45h-85l-3-2z" fill="#58584b" />
            <path d="M1084 197h12v571h-12z" fill="url(#spineg)" />
            <path d="M1084.500 500v268" stroke="#5c5c60" />
            <path d="M804 477h270v11H804z" fill="#4c5259" /><path d="M804 477.500h270" stroke="#6f7b82" />
            <path d="M1104 478h272v10h-272z" fill="#d6d7c6" />
            <rect v-for="(g, k) in bladeGrain" :key="k" :x="g.x" :y="g.y" width="1" height="1" :fill="g.c" :opacity="g.x < 1090 ? g.o * 0.4 : g.o" />
            <circle cx="1090" cy="483.500" r="16" fill="#343638" /><circle cx="1090" cy="482.500" r="14.500" fill="#4e4f4e" /><path d="M1076 480a14.500 14.500 0 0 1 28 0" fill="none" stroke="#69757c" />
            <path d="M1100.500 823v40" stroke="#747474" /><path d="M1100 868q-1 20-6 38" stroke="#4c4c4c" fill="none" />
            <path d="M1094 864h7v3h-7z" fill="#333" /><path d="M1098 862h3v5h-3z" fill="#5c4840" />
          </svg>
          <div class="triad">
            <svg viewBox="0 0 60 56" aria-hidden="true">
              <path d="M12 5.500h21v5H12z" fill="#c01818" /><path d="M12 7.500h21v1H12z" fill="#fff" /><path d="m33 2 12 6-12 6z" fill="#d01818" />
              <path d="M6 12h5v24H6z" fill="#1818d0" /><path d="M8 12h1v24H8z" fill="#fff" /><path d="m2.500 34 6 12 6-12z" fill="#1818c8" />
              <circle cx="8.500" cy="8" r="6" fill="#1c4a1c" /><path d="m5.500 3 3 4 3-4M8.500 7v5" fill="none" stroke="#0a8a0a" />
              <path d="m46 2 7 11M53 2l-7 11" stroke="#f01818" stroke-width="1.300" />
              <path d="M5.500 46h5l-5 10h5" fill="none" stroke="#1a1af0" stroke-width="1.300" />
            </svg>
            <p>*Top</p>
          </div>
          <nav class="pane">
            <button v-for="p in paneTabs" :key="p" :class="{ on: p === 'ball' }" :aria-label="p"><svg class="ic"><use :href="'#' + p" /></svg></button>
          </nav>
        </section>
      </div>

      <nav class="sheets">
        <button class="nv" aria-label="First"><svg viewBox="0 0 12 12"><path d="M2 1h1v10H2zM10 1v10L4 6z" /></svg></button>
        <button class="nv" aria-label="Previous"><svg viewBox="0 0 12 12"><path d="M9 1v10L3 6z" /></svg></button>
        <button class="nv" aria-label="Next"><svg viewBox="0 0 12 12"><path d="M3 1v10l6-5z" /></svg></button>
        <button class="nv" aria-label="Last"><svg viewBox="0 0 12 12"><path d="M2 1v10l6-5zM9 1h1v10H9z" /></svg></button>
        <button class="sh on">Model</button><button class="sh v3">3D Views</button><button class="sh ms">Motion Study 1</button>
      </nav>

      <footer class="status">
        <span class="ver">SOLIDWORKS Premium 2019 SP4.0</span>
        <span class="cell edit">Editing Part</span>
        <span class="cell gap"></span>
        <span class="units">MMGS</span>
        <i class="tri upw"></i>
        <svg class="tag" viewBox="0 0 20 20"><path d="m2 5 9-3 7 6-3 7-4 3-8-9z" fill="#eee" stroke="#444" stroke-width="1.300" /><path d="m2 5 7 7 9-4M9 12l2 6" fill="none" stroke="#444" stroke-width="1.200" /><circle cx="9" cy="6" r="1.500" fill="none" stroke="#444" /></svg>
        <svg class="size" viewBox="0 0 12 12"><path d="M8 0h3v3H8zM8 4h3v3H8zM4 4h3v3H4zM8 8h3v3H8zM4 8h3v3H4zM0 8h3v3H0z" fill="#bbb" /></svg>
      </footer>
    </main>

    <footer class="taskbar">
      <button class="start" aria-label="Start"><svg viewBox="0 0 20 20"><path d="m0 3 8.500-1.200v7.700H0zM9.500 1.600 20 0v9.500H9.500zM0 10.500h8.500v7.700L0 17zM9.500 10.500H20V20L9.500 18.400z" fill="#fff" /></svg></button>
      <label class="search">
        <svg viewBox="0 0 22 22"><circle cx="13.500" cy="8.500" r="6.800" fill="none" stroke="#eee" stroke-width="1.500" /><path d="m1 21 7.500-7.500" stroke="#eee" stroke-width="1.500" /></svg>
        <input type="text" aria-label="Type here to search" placeholder="Type here to search" />
      </label>
      <button class="sys" aria-label="Cortana"><svg viewBox="0 0 22 22"><circle cx="11" cy="11" r="8.500" fill="none" stroke="#fff" stroke-width="2.400" /></svg></button>
      <button class="sys tv" aria-label="Task View"><svg viewBox="0 0 22 22"><path d="M1.500 2v3h13V2M1.500 7.500h13v8h-13zM1.500 21v-3h13v3M19.500 2v6M19.500 13v8" fill="none" stroke="#fff" stroke-width="1.300" /><path d="M18 9h3v3.500h-3z" fill="#fff" /></svg></button>
      <button v-for="a in apps" :key="a" class="app" :class="a" :aria-label="a">
        <svg><use :href="'#' + a" /></svg><small v-if="a === 'sw'">2019</small>
      </button>
      <div class="tray">
        <button class="info" aria-label="Help and information"><svg viewBox="0 0 32 32"><circle cx="15" cy="15" r="14" fill="#fff" /><circle cx="15" cy="15" r="12.500" fill="#109ad6" /><path d="M10.500 12q0-5 5-5t5 4c0 4-5 4-5 8" fill="none" stroke="#fff" stroke-width="2.800" /><circle cx="15.500" cy="23" r="1.900" fill="#fff" /><circle cx="25" cy="23" r="6.500" fill="#f0a020" /><path d="M24 19h2v2h-2zM24 22h2v5h-2z" fill="#fff" /></svg></button>
        <button class="weather">
          <svg viewBox="0 0 30 32"><path d="M18 1c8 5 11 18 2 24-6 4-14 3-18-3 10 2 19-8 16-21z" fill="#ffc814" /><path d="M5 27q0-4 5-4 3-5 8-2 6-2 8 4l3 1-4 2-14 1z" fill="#d8c8c0" opacity=".85" /><path d="M8 30h14" stroke="#b98" stroke-width="1.500" /></svg>
          <span>85°F&nbsp; Haze</span>
        </button>
        <button v-for="t in tray" :key="t.i" class="ti" :aria-label="t.t"><svg class="tic"><use :href="'#' + t.i" /></svg></button>
        <button class="lang">ENG<br />INTL</button>
        <button class="clock">11:49 PM<br />4/25/2022</button>
        <button class="note" aria-label="Notifications"><svg viewBox="0 0 22 22"><path d="M1 1h20v16h-8l-4 4v-4H1z" fill="#fff" /><path d="M4 5.500h14M4 9h14M4 12.500h9" stroke="#3f2f36" stroke-width="1.200" /></svg><span>2</span></button>
      </div>
    </footer>
  </div>
</template>

<style>
html, body { margin: 0; overflow: hidden; }
</style>

<style scoped>
* { box-sizing: border-box; }
.desktop {
  height: 100vh;
  display: flex;
  flex-direction: column;
  font: 14px/19px "Open Sans", "Noto Sans", sans-serif;
  color: #000;
  background:
    linear-gradient(#e6cdd2, #e3c6cc 75%, #dba3a5) right / 12px 100% no-repeat,
    linear-gradient(#e9cdd2, #dcbcc2 55%, #1b9aa0 57%, #16687c 75%, #1f8b98) left / 4px 100% no-repeat,
    linear-gradient(90deg, #2fa2a8, #258b98 20%, #2c7893 40%, #3a5f86 65%, #8c7196 80%, #c98d96 97%, #e59a94);
}
button { background: none; border: 0; padding: 0; font: inherit; color: inherit; display: flex; align-items: center; justify-content: center; }
input { border: 0; outline: 0; background: none; font: inherit; padding: 0; min-width: 0; flex: 1; }
.defs { position: absolute; }
.ic { width: 20px; height: 20px; flex: none; display: block; }
.window { flex: 1; min-height: 0; margin: 0 12px 12px 4px; border: 1px solid #70656b; display: flex; flex-direction: column; background: #f7f7f7; }
.tri { border: 3px solid transparent; border-top: 4px solid #333; border-bottom: 0; }
.tri.big { border-width: 4px 4px 0; border-top-color: #222; margin-right: 4px; }
.tri.dim { border-top-color: #666; }
.tri.upw { border-top: 0; border-bottom: 4px solid #333; margin: 0 66px 0 26px; }
.dot { width: 6px; height: 6px; border-radius: 50%; border: 1px solid #888; background: #ccc; }

.titlebar { height: 41px; border-top: 8px solid #fff; border-bottom: 1px solid #7c7c7c; display: flex; align-items: center; padding-top: 1px; }
.brand { width: 145px; height: 37px; margin: -1px 0 0 10px; z-index: 1; border: 1px solid #8c8c8c; border-top: 0; background: linear-gradient(160deg, #fff 40%, #d8d8d8); display: flex; align-items: center; padding-left: 4px; align-self: flex-start; }
.ds { width: 30px; height: 32px; flex: none; }
.word { color: #d9261c; font: italic 16px "Open Sans", sans-serif; margin-left: 4px; padding-top: 5px; }
.word b { font-weight: 700; }
.flyout { width: 22px; height: 32px; border-right: 2px solid #aaa; }
.tri-r { border: 6px solid transparent; border-left: 6px solid #333; border-right: 0; }
.quick { display: flex; align-items: center; margin-left: 28px; }
.qb { width: 25px; height: 25px; }
.qd { width: 14px; height: 25px; }
.sel { display: flex; border: 1px solid #666; }
.selb { width: 25px; height: 25px; background: #b4b4b4; border-right: 1px solid #777; }
.seld { width: 13px; height: 25px; }
.doc { flex: 1; margin: 0; text-align: center; font-weight: 400; font-size: 13px; }
.help { width: 252px; height: 29px; border: 1px solid #111; background: #ecedf1; display: flex; align-items: center; padding-left: 5px; }
.help input { margin-left: 8px; font-size: 13px; }
.help input::placeholder { color: #666; opacity: 1; }
.mag { width: 24px; height: 24px; margin-right: 6px; }
.wctl { display: flex; align-items: center; margin-left: 4px; }
.wctl button { width: 26px; height: 26px; }
.wctl .n { width: 13px; }
.wctl .q { font-size: 20px; font-weight: 700; color: #333; }

.ribbon { height: 87px; border-bottom: 1px solid #7c7c7c; display: flex; padding: 6px 0 2px 6px; }
.rb { flex-direction: column; justify-content: flex-start; padding-top: 12px; white-space: nowrap; flex: none; font-size: 13px; }
.rb.off { color: #b8b8b8; }
.rb.on { background: #b0b0b0; border: 1px solid #666; padding-top: 11px; margin-left: 2px; }
.tabrow { height: 28px; display: flex; background: #000; }
.tabs { display: flex; flex: none; }
.tabs button { background: #d4d4d4; border-right: 1px solid #7c7c7c; border-bottom: 1px solid #7c7c7c; color: #222; white-space: nowrap; }
.tabs .on { background: #f7f7f7; font-weight: 700; color: #333; border-bottom-color: #f7f7f7; }
.heads { display: flex; align-items: center; margin-left: 122px; padding-top: 1px; opacity: .9; }
.hb { width: 26px; height: 26px; }
.hd { width: 14px; height: 26px; }
.docctl { display: flex; margin: 2px 7px 0 auto; }
.docctl button { width: 26px; }
.docctl .ic { width: 18px; height: 18px; }

.work { flex: 1; min-height: 0; display: flex; }
.panel { width: 272px; border-right: 2px solid #e8e8e8; display: flex; flex-direction: column; padding: 0 0 5px 1px; }
.grip { height: 21px; margin: 4px 2px 0 0; border-top: 1px solid #bbb; border-bottom: 1px solid #aaa; display: flex; align-items: center; justify-content: center; flex: none; }
.ptabs { display: flex; height: 26px; margin: 4px 2px 0 1px; border-bottom: 1px solid #aaa; flex: none; }
.ptabs button { width: 40px; background: #d4d4d4; border: 1px solid #888; border-left: 0; }
.ptabs .on { background: #f7f7f7; border-bottom: 0; }
.ptabs .more { width: 16px; margin-left: auto; background: none; border: 0; }
.more svg { width: 10px; height: 12px; }
.filter { height: 32px; margin: 0 4px; border: 1px solid #bbb; display: flex; align-items: center; padding-left: 1px; flex: none; }
.body { flex: 1; min-height: 0; display: flex; }
.tree { flex: 1; margin: 0; padding: 0 0 0 6px; list-style: none; overflow: hidden; }
.tree li { height: 24px; display: flex; align-items: center; }
.tree .exp { width: 10px; height: 8px; margin-right: 9px; }
.tree .ic { margin-right: 4px; }
.tree .closed .exp { border: 4px solid transparent; border-left: 5px solid #555; border-right: 0; width: 0; margin: 0 11px 0 3px; }
.tree .open .exp { border: 4px solid transparent; border-top: 5px solid #555; border-bottom: 0; width: 0; height: 0; margin: 0 10px 0 1px; }
.tree .child { padding-left: 24px; }
.vbar { width: 19px; background: #efefef; display: flex; flex-direction: column; align-items: center; padding: 8px 0; }
.vbar svg { width: 12px; height: 8px; }
.vthumb { width: 100%; height: 49%; margin: 98px 0 auto; background: #cdcdcd; }
.hbar { height: 20px; background: #efefef; display: flex; align-items: center; padding: 0 26px 0 6px; flex: none; }
.hbar svg { width: 8px; height: 12px; }
.hthumb { width: 104px; height: 20px; background: #cdcdcd; margin: 0 auto 0 7px; }

.viewport { flex: 1; min-width: 0; position: relative; overflow: hidden; display: flex; justify-content: center; align-items: flex-start; padding: 40px 4px 0 0; background: linear-gradient(#030303, #0b0b0b 6%, #252525 25%, #383838 39%, #474747 50%, #575757 66%, #646464 82%, #6b6b6b); border-right: 1px solid #f0f0f0; }
.drone { width: 572px; height: 712px; flex: none; }
.splitter { position: absolute; left: 0; top: 371px; width: 11px; height: 49px; background: #f7f7f7; border: 1px solid #999; border-left: 0; }
.triad { position: absolute; left: 42px; bottom: 0; }
.triad svg { width: 60px; height: 56px; display: block; }
.triad p { margin: 0 0 0 -31px; font: 600 16px/20px "Noto Sans", sans-serif; color: #1c1c1c; }
.pane { position: absolute; right: -1px; top: 30px; width: 33px; border: 1px solid #888; border-right: 0; }
.pane button { width: 100%; height: 30px; background: #d4d4d4; border-bottom: 1px solid #888; }
.pane button:last-child { border-bottom: 0; }
.pane .on { background: #f7f7f7; }

.sheets { height: 21px; display: flex; border-top: 1px solid #7c7c7c; border-bottom: 1px solid #7c7c7c; padding-left: 2px; flex: none; }
.nv { width: 20px; background: #a9abc0; border: 1px solid #83859c; }
.nv svg { width: 12px; height: 12px; fill: #7f8197; }
.sh { border-right: 1px solid #7c7c7c; background: #d4d4d4; font-size: 15px; padding-top: 1px; }
.sh.on { width: 77px; background: #f7f7f7; font-weight: 700; padding-left: 4px; }
.v3 { width: 89px; }
.ms { width: 144px; padding-right: 10px; }
.status { height: 20px; display: flex; align-items: center; flex: none; padding-top: 2px; }
.ver { flex: 1; }
.cell { border-left: 1px solid #ccc; border-right: 1px solid #ccc; height: 19px; }
.edit { padding: 0 7px 0 3px; box-shadow: -8px 0 0 #f7f7f7, -9px 0 0 #ccc; }
.gap { width: 16px; border-left: 0; }
.units { margin-left: 39px; }
.tag { width: 17px; height: 17px; }
.size { width: 12px; height: 12px; margin: 4px 1px 0 12px; }

.taskbar { height: 50px; flex: none; display: flex; color: #fff; background: linear-gradient(90deg, #22373b, #213239 25%, #203040 55%, #262f3e 72%, #3a303c 84%, #46333a); }
.start { width: 60px; }
.start svg { width: 20px; height: 20px; }
.search { width: 430px; background: #333; border: 1px solid #5a5a5a; border-bottom: 0; display: flex; align-items: center; padding-left: 14px; gap: 13px; }
.search svg { width: 22px; height: 22px; }
.search input { font-size: 18px; color: #fff; }
.search input::placeholder { color: #d4d4d4; opacity: 1; }
.sys { width: 60px; }
.sys svg { width: 22px; height: 22px; }
.tv { margin-right: 2px; }
.app { width: 62px; position: relative; }
.app svg { width: 31px; height: 31px; }
.chrome { background: linear-gradient(#76b9ed, #76b9ed) bottom / 52px 3px no-repeat; }
.sw { background: linear-gradient(#76b9ed, #76b9ed) bottom / 100% 3px no-repeat, linear-gradient(90deg, #4d5a64 56px, #2c3a44 56px, #3f4c56 57px); }
.sw small { position: absolute; right: 15px; bottom: 7px; font: 700 9px/10px "Open Sans", sans-serif; color: #fff; text-shadow: 0 0 2px #000, 0 0 2px #000; }
.tray { margin-left: auto; display: flex; border-right: 1px solid #6a5a60; margin-right: 5px; padding-right: 12px; }
.info { margin-right: 116px; }
.info svg { width: 30px; height: 30px; }
.weather { font-size: 17px; white-space: nowrap; margin-right: 14px; }
.weather svg { width: 28px; height: 30px; margin-right: 10px; }
.ti { width: 30px; }
.tic { width: 20px; height: 20px; }
.lang { width: 46px; line-height: 22px; }
.clock { width: 84px; line-height: 22px; }
.note { width: 48px; position: relative; }
.note svg { width: 22px; height: 22px; margin-right: 4px; }
.note span { position: absolute; right: 0; bottom: 6px; width: 20px; height: 20px; border-radius: 50%; background: #3b3436; border: 1px solid #998; font: 600 12px/18px "Open Sans", sans-serif; }
</style>
